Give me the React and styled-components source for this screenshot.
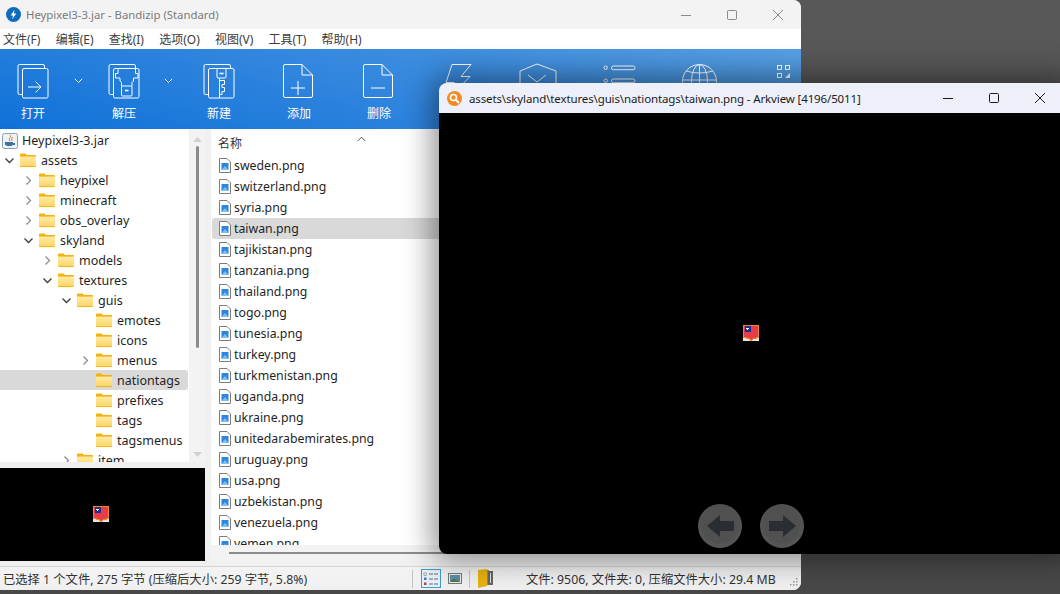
import React from "react";
import styled, { createGlobalStyle } from "styled-components";

const UI_FONT = `"Noto Sans", "Noto Sans CJK SC", sans-serif`;

const GlobalStyle = createGlobalStyle`
  html, body {
    margin: 0;
    padding: 0;
    background: #4c4c4c;
    overflow: hidden;
  }
  * {
    box-sizing: border-box;
  }
`;

const Desktop = styled.div`
  position: relative;
  width: 1060px;
  height: 594px;
  overflow: hidden;
  background: linear-gradient(to bottom, #585858, #555 60%, #484848);
  font-family: ${UI_FONT};
`;

/* windows on the desktop are the one thing placed by coordinates */
const MainWindow = styled.div`
  position: absolute;
  left: 0;
  top: 0;
  width: 801px;
  height: 590px;
  display: flex;
  flex-direction: column;
  background: #f0f0f0;
  border-radius: 0 8px 8px 0;
  overflow: hidden;
`;

const TitleBar = styled.div`
  height: 29px;
  display: flex;
  align-items: center;
  padding-left: 6px;
  background: #f3f3f3;
  color: #7b7b7b;
  font-size: 11.35px;
  flex-shrink: 0;
`;

const TitleText = styled.span`
  margin-left: 5px;
  flex: 1;
`;

const WinButton = styled.div`
  width: 46px;
  height: 29px;
  display: flex;
  align-items: center;
  justify-content: center;
  color: #8a8a8a;
`;

const MenuBar = styled.div`
  height: 20px;
  display: flex;
  align-items: center;
  gap: 15.2px;
  padding-left: 3px;
  background: #fff;
  color: #3c3c3c;
  font-size: 12px;
  flex-shrink: 0;
`;

const Toolbar = styled.div`
  position: relative;
  height: 80px;
  display: flex;
  background: linear-gradient(195deg, #58a0e3, #3a8bdf 40%, #0f71d8);
  flex-shrink: 0;
`;

const Tool = styled.div`
  width: ${(p) => p.$w || 80}px;
  display: flex;
  flex-direction: column;
  align-items: center;
  padding-top: 14px;
  color: #fff;
  font-size: 12px;
`;

const ToolLabel = styled.span`
  margin-top: 5px;
  line-height: 20px;
`;

const Caret = styled.div`
  width: ${(p) => p.$w}px;
  display: flex;
  justify-content: center;
  padding-top: 29px;
`;

const CornerGrid = styled.div`
  position: absolute;
  right: 11px;
  top: 12px;
`;

const Body = styled.div`
  flex: 1;
  min-height: 0;
  display: flex;
  padding-bottom: 5px;
  background: #f0f0f0;
`;

const LeftColumn = styled.div`
  width: 205px;
  display: flex;
  flex-direction: column;
`;

const TreePane = styled.div`
  height: 333px;
  display: flex;
  background: #fff;
  padding-top: 2px;
  overflow: hidden;
`;

const TreeList = styled.div`
  flex: 1;
  min-width: 0;
`;

const TreeRow = styled.div`
  height: 20px;
  display: flex;
  align-items: center;
  padding-left: ${(p) => p.$depth * 19 + 4}px;
  margin-right: 1px;
  background: ${(p) => (p.$selected ? "#d9d9d9" : "transparent")};
  border-radius: 0 3px 3px 0;
  color: #1f1f1f;
  font-size: 12.5px;
  white-space: nowrap;
`;

const RootRow = styled(TreeRow)`
  height: 19px;
  padding-left: 2px;
  gap: 4px;
`;

const Chevron = styled.span`
  width: 11px;
  height: 11px;
  display: flex;
  margin-right: 5px;
  flex-shrink: 0;
`;

const FolderLabel = styled.span`
  margin-left: 5px;
`;

const ScrollTrack = styled.div`
  width: 16px;
  margin-top: -2px;
  flex-shrink: 0;
  display: flex;
  flex-direction: column;
  align-items: center;
  background: #f3f3f3;
  padding-top: 8px;
`;

const ScrollThumb = styled.div`
  width: 3px;
  height: 207px;
  margin-top: 4px;
  border-radius: 2px;
  background: #8b8b8b;
`;

const ScrollDown = styled.div`
  margin-top: 92px;
`;

const Preview = styled.div`
  height: 93px;
  margin-top: 6px;
  display: flex;
  align-items: center;
  justify-content: center;
  padding: 0 4px 2px 0;
  background: #000;
`;

const Splitter = styled.div`
  width: 6px;
  flex-shrink: 0;
`;

const ListPane = styled.div`
  flex: 1;
  min-width: 0;
  display: flex;
  flex-direction: column;
  background: #fff;
`;

const ListHeader = styled.div`
  position: relative;
  height: 26px;
  display: flex;
  align-items: center;
  padding: 2px 0 0 7px;
  color: #333;
  font-size: 12px;
  flex-shrink: 0;
`;

const SortMark = styled.div`
  position: absolute;
  left: 146px;
  top: 0;
`;

const FileRows = styled.div`
  flex: 1;
  min-height: 0;
  overflow: hidden;
`;

const FileRow = styled.div`
  height: 21px;
  display: flex;
  align-items: center;
  gap: 3px;
  padding-left: 7px;
  margin-left: 1px;
  background: ${(p) => (p.$selected ? "#d9d9d9" : "transparent")};
  border-radius: 3px 0 0 3px;
  color: #1f1f1f;
  font-size: 12.3px;
`;

const HScroll = styled.div`
  height: 16px;
  flex-shrink: 0;
  display: flex;
  align-items: center;
  padding-left: 18px;
  background: #f3f3f3;
`;

const HThumb = styled.div`
  width: 300px;
  height: 2px;
  background: #8b8b8b;
`;

const StatusBar = styled.div`
  height: 24px;
  display: flex;
  align-items: center;
  padding-left: 3px;
  background: linear-gradient(to bottom, #f3f3f3, #f0f0f0);
  border-top: 1px solid #d5d5d5;
  color: #333;
  font-size: 12.3px;
  flex-shrink: 0;
`;

const StatusLeft = styled.span`
  width: 409px;
  white-space: nowrap;
`;

const StatusSep = styled.span`
  width: 1px;
  height: 18px;
  margin-left: ${(p) => p.$ml || 0}px;
  background: #c4c4c4;
`;

const StatusIcon = styled.span`
  display: flex;
  margin-left: ${(p) => p.$ml}px;
`;

const ListToggle = styled.span`
  width: 20px;
  height: 19px;
  margin-left: 8px;
  display: flex;
  align-items: center;
  justify-content: center;
  background: #e9f1f8;
  border: 1px solid #3f9bd0;
`;

const StatusRight = styled.span`
  margin-left: 32px;
  white-space: nowrap;
`;

const Grip = styled.span`
  margin-left: auto;
  margin-right: 3px;
  margin-top: 8px;
  display: flex;
`;

const ViewerWindow = styled.div`
  position: absolute;
  left: 439px;
  top: 83px;
  width: 630px;
  height: 471px;
  display: flex;
  flex-direction: column;
  border-radius: 8px 0 0 8px;
  overflow: hidden;
  box-shadow: 0 0 30px 6px rgba(0, 0, 0, 0.45);
`;

const ViewerTitle = styled.div`
  height: 30px;
  display: flex;
  align-items: center;
  padding-left: 8px;
  background: #eef0f9;
  color: #1c1c1c;
  font-size: 11.5px;
  letter-spacing: -0.13px;
  flex-shrink: 0;
`;

const ViewerName = styled.span`
  margin-left: 7px;
  width: 456px;
  white-space: nowrap;
`;

const ViewerButton = styled.div`
  width: 46px;
  display: flex;
  justify-content: center;
  color: #1c1c1c;
`;

const Stage = styled.div`
  position: relative;
  flex: 1;
  display: flex;
  align-items: center;
  justify-content: center;
  padding: 0 6px 2px 0;
  background: #000;
`;

const NavGroup = styled.div`
  position: absolute;
  left: 259px;
  bottom: 6px;
  display: flex;
  gap: 18px;
`;

const NavButton = styled.div`
  width: 44px;
  height: 44px;
  border-radius: 50%;
  display: flex;
  align-items: center;
  justify-content: center;
  background: radial-gradient(circle at 50% 45%, #505050 55%, #666 100%);
`;

const Flag = () => (
  <svg width="16" height="16" viewBox="0 0 16 16" shapeRendering="crispEdges">
    <rect y="12" width="16" height="4" fill="#e4e4e4" />
    <path d="M0 0H16V13L11 14L8 16L5 14L0 13Z" fill="#f08a24" />
    <path d="M1 1H15V12L10 13L8 15L6 13L1 12Z" fill="#e63d49" />
    <rect x="2" y="1" width="6" height="6" fill="#1c2f8f" />
    <path d="M4 3H5V2H5V3H6V4H5V5H4V4H3V3Z" fill="#fff" />
  </svg>
);

const Folder = () => (
  <svg width="16" height="14" viewBox="0 0 16 14" style={{ flexShrink: 0 }}>
    <defs>
      <linearGradient id="folderFill" x1="0" y1="0" x2="0" y2="1">
        <stop offset="0" stopColor="#ffeaa6" />
        <stop offset="1" stopColor="#fed768" />
      </linearGradient>
    </defs>
    <path d="M0 1.5Q0 .5 1 .5H5.5L7 2H15Q16 2 16 3V4H0Z" fill="#f4b20d" />
    <rect y="3" width="16" height="11" rx="1" fill="#f5b50f" />
    <rect y="3.6" width="16" height="9.4" fill="url(#folderFill)" />
  </svg>
);

const ChevronIcon = ({ open }) => (
  <svg width="11" height="11" viewBox="0 0 11 11" fill="none" stroke={open ? "#3c3c3c" : "#8d8d8d"} strokeWidth="1.3">
    <path d={open ? "M1.5 3.5L5.5 7.5L9.5 3.5" : "M3.5 1.5L7.5 5.5L3.5 9.5"} />
  </svg>
);

const FileIcon = () => (
  <svg width="12" height="15" viewBox="0 0 12 15" style={{ flexShrink: 0 }}>
    <path d="M.5.5H8L11.5 4V14.5H.5Z" fill="#fff" stroke="#7c7c7c" />
    <rect x="2.5" y="5" width="7" height="7" fill="#2f86dc" />
    <path d="M2.5 12L6 8L9.5 12Z" fill="#7cc0f2" />
  </svg>
);

const ToolIcon = ({ children, w = 34, h = 36 }) => (
  <svg width={w} height={h} viewBox={`0 0 ${w} ${h}`} fill="none" stroke="#fff" strokeWidth="1">
    {children}
  </svg>
);

const BackSheet = () => (
  <path d="M6.5 31.5H3.5Q2 31.5 2 30V3Q2 1.5 3.5 1.5H27Q28.5 1.5 28.5 3V5.5" />
);

const OpenIcon = () => (
  <ToolIcon>
    <BackSheet />
    <rect x="6.5" y="5.5" width="25.5" height="29.5" rx="1.5" />
    <path d="M12 24H25M19.5 18.5L25 24L19.5 29.5" />
  </ToolIcon>
);

const ExtractIcon = () => (
  <ToolIcon>
    <BackSheet />
    <rect x="6.5" y="5.5" width="25.5" height="29.5" rx="1.5" />
    <path d="M11 5.5V10.5H8.5V15H13V18L14.5 19.5V23M28.5 5.5V10.5H31V15H26.5V18L25 19.5V23" />
    <rect x="14.5" y="23" width="10.5" height="10" rx="1" />
    <path d="M18 27.5H21.5" strokeWidth="1.6" />
  </ToolIcon>
);

const NewIcon = () => (
  <ToolIcon>
    <BackSheet />
    <rect x="6.5" y="5.5" width="25.5" height="29.5" rx="1.5" />
    <rect x="15" y="5.5" width="9" height="9.5" rx="1" />
    <path d="M17.5 10.5H21.5" strokeWidth="1.6" />
    <path d="M17.5 15V35M17.5 17.5H22.5V21.5H20V24.5H22.5V28.5H20V31.5H17.5" />
  </ToolIcon>
);

const PageIcon = ({ children }) => (
  <ToolIcon>
    <path d="M3 1.5H20L30.5 12V33Q30.5 34.5 29 34.5H3Q1.5 34.5 1.5 33V3Q1.5 1.5 3 1.5Z" />
    <path d="M20 1.5V12H30.5" />
    {children}
  </ToolIcon>
);

const SmallCaret = () => (
  <svg width="9" height="6" viewBox="0 0 9 6" fill="none" stroke="#fff" strokeWidth="1">
    <path d="M.8.8L4.5 4.5L8.2.8" />
  </svg>
);

const MinIcon = () => (
  <svg width="12" height="12" viewBox="0 0 12 12" stroke="currentColor" fill="none">
    <path d="M1 6.5H11" />
  </svg>
);

const MaxIcon = () => (
  <svg width="12" height="12" viewBox="0 0 12 12" stroke="currentColor" fill="none">
    <rect x="1.5" y="1.5" width="9" height="9" rx="1" />
  </svg>
);

const CloseIcon = () => (
  <svg width="12" height="12" viewBox="0 0 12 12" stroke="currentColor" fill="none">
    <path d="M1 1L11 11M11 1L1 11" />
  </svg>
);

const menus = ["文件(F)", "编辑(E)", "查找(I)", "选项(O)", "视图(V)", "工具(T)", "帮助(H)"];

const tree = [
  { name: "assets", depth: 0, chevron: "open" },
  { name: "heypixel", depth: 1, chevron: "closed" },
  { name: "minecraft", depth: 1, chevron: "closed" },
  { name: "obs_overlay", depth: 1, chevron: "closed" },
  { name: "skyland", depth: 1, chevron: "open" },
  { name: "models", depth: 2, chevron: "closed" },
  { name: "textures", depth: 2, chevron: "open" },
  { name: "guis", depth: 3, chevron: "open" },
  { name: "emotes", depth: 4 },
  { name: "icons", depth: 4 },
  { name: "menus", depth: 4, chevron: "closed" },
  { name: "nationtags", depth: 4, selected: true },
  { name: "prefixes", depth: 4 },
  { name: "tags", depth: 4 },
  { name: "tagsmenus", depth: 4 },
  { name: "item", depth: 3, chevron: "closed" },
];

const files = [
  "sweden", "switzerland", "syria", "taiwan", "tajikistan", "tanzania", "thailand",
  "togo", "tunesia", "turkey", "turkmenistan", "uganda", "ukraine",
  "unitedarabemirates", "uruguay", "usa", "uzbekistan", "venezuela", "yemen",
];

const App = () => (
  <Desktop>
    <GlobalStyle />
    <MainWindow>
      <TitleBar>
        <svg width="15" height="15" viewBox="0 0 16 16">
          <circle cx="8" cy="8" r="8" fill="#0f6cbd" />
          <path d="M9 3L5 9H7.5L6.5 13L11 7H8.5Z" fill="#fff" />
        </svg>
        <TitleText>Heypixel3-3.jar - Bandizip (Standard)</TitleText>
        <WinButton><MinIcon /></WinButton>
        <WinButton><MaxIcon /></WinButton>
        <WinButton><CloseIcon /></WinButton>
      </TitleBar>
      <MenuBar>
        {menus.map((m) => <span key={m}>{m}</span>)}
      </MenuBar>
      <Toolbar>
        <Tool $w={66}><OpenIcon /><ToolLabel>打开</ToolLabel></Tool>
        <Caret $w={25}><SmallCaret /></Caret>
        <Tool $w={66}><ExtractIcon /><ToolLabel>解压</ToolLabel></Tool>
        <Caret $w={22}><SmallCaret /></Caret>
        <Tool><NewIcon /><ToolLabel>新建</ToolLabel></Tool>
        <Tool>
          <PageIcon><path d="M9 25H23M16 18V32" /></PageIcon>
          <ToolLabel>添加</ToolLabel>
        </Tool>
        <Tool>
          <PageIcon><path d="M9 25H23" /></PageIcon>
          <ToolLabel>删除</ToolLabel>
        </Tool>
        <Tool>
          <ToolIcon>
            <path d="M10 1.5H29L19 13.5H28L8 34L12.5 19.5H4Z" />
          </ToolIcon>
        </Tool>
        <Tool>
          <ToolIcon w={40}>
            <path d="M18 1L37 8V22L18 35L1 22V8Z" />
            <path d="M9 12L18 19L27 12" />
          </ToolIcon>
        </Tool>
        <Tool>
          <ToolIcon>
            <circle cx="3.7" cy="4.7" r="1.7" />
            <rect x="9.5" y="3" width="23.5" height="3.7" rx="1.8" />
            <circle cx="3.7" cy="17.7" r="1.7" />
            <rect x="9.5" y="16" width="23.5" height="3.7" rx="1.8" />
          </ToolIcon>
        </Tool>
        <Tool>
          <ToolIcon w={36}>
            <circle cx="18.5" cy="18.5" r="17" />
            <ellipse cx="18.5" cy="18.5" rx="8" ry="17" />
            <path d="M18.5 1.5V35.5M1.5 17H35.5M5 8Q18.5 12 32 8" />
          </ToolIcon>
        </Tool>
        <CornerGrid>
          <svg width="13" height="13" viewBox="0 0 13 13" fill="none" stroke="#fff">
            <rect x=".5" y=".5" width="4" height="4" />
            <rect x="8.5" y=".5" width="4" height="4" />
            <rect x=".5" y="8.5" width="4" height="4" />
            <path d="M8 13L13 8V13Z" fill="#fff" stroke="none" />
          </svg>
        </CornerGrid>
      </Toolbar>
      <Body>
        <LeftColumn>
          <TreePane>
            <TreeList>
              <RootRow $depth={0}>
                <svg width="16" height="16" viewBox="0 0 16 16">
                  <rect x=".5" y=".5" width="15" height="15" rx="2" fill="#eef2f7" stroke="#8aa0b8" />
                  <path d="M8 2C10 4 6 5 8 8M10 4C11 5 9 6 10 8" stroke="#e4772e" fill="none" />
                  <path d="M3 9H11V11Q11 13 7.5 13Q3 13 3 11ZM11 10H13V12H11" fill="#3f6fa8" />
                </svg>
                <span>Heypixel3-3.jar</span>
              </RootRow>
              {tree.map((row) => (
                <TreeRow key={row.name} $depth={row.depth} $selected={row.selected}>
                  <Chevron>
                    {row.chevron && <ChevronIcon open={row.chevron === "open"} />}
                  </Chevron>
                  <Folder />
                  <FolderLabel>{row.name}</FolderLabel>
                </TreeRow>
              ))}
            </TreeList>
            <ScrollTrack>
              <svg width="9" height="5" viewBox="0 0 9 5"><path d="M0 5L4.5 0L9 5Z" fill="#d0d0d0" /></svg>
              <ScrollThumb />
              <ScrollDown>
                <svg width="9" height="5" viewBox="0 0 9 5"><path d="M0 0H9L4.5 5Z" fill="#d0d0d0" /></svg>
              </ScrollDown>
            </ScrollTrack>
          </TreePane>
          <Preview><Flag /></Preview>
        </LeftColumn>
        <Splitter />
        <ListPane>
          <ListHeader>
            名称
            <SortMark>
              <svg width="9" height="6" viewBox="0 0 9 6" fill="none" stroke="#555">
                <path d="M.8 5L4.5 1.2L8.2 5" />
              </svg>
            </SortMark>
          </ListHeader>
          <FileRows>
            {files.map((f) => (
              <FileRow key={f} $selected={f === "taiwan"}>
                <FileIcon />
                <span>{f}.png</span>
              </FileRow>
            ))}
          </FileRows>
          <HScroll><HThumb /></HScroll>
        </ListPane>
      </Body>
      <StatusBar>
        <StatusLeft>已选择 1 个文件, 275 字节 (压缩后大小: 259 字节, 5.8%)</StatusLeft>
        <StatusSep />
        <ListToggle>
          <svg width="16" height="14" viewBox="0 0 16 14" fill="none" stroke="#5f6b78">
            <path d="M6 2H10M11 2H15M6 7H10M11 7H15M6 12H10M11 12H15" />
            <rect x="1" y="1" width="2.5" height="2.5" fill="#fff" stroke="#777" strokeWidth=".6" />
            <rect x="1" y="5.5" width="2.5" height="2.5" fill="#3c78c8" stroke="none" />
            <rect x="1" y="10.5" width="2.5" height="2.5" fill="#c83c3c" stroke="none" />
          </svg>
        </ListToggle>
        <StatusIcon $ml={7}>
          <svg width="14" height="11" viewBox="0 0 14 11">
            <rect x=".5" y=".5" width="13" height="10" fill="#ececec" stroke="#777" />
            <rect x="2" y="2" width="10" height="7" fill="#5b90a8" />
            <path d="M2 9L6 5.5L12 9Z" fill="#4e7a4e" />
          </svg>
        </StatusIcon>
        <StatusSep $ml={7} />
        <StatusIcon $ml={8}>
          <svg width="16" height="19" viewBox="0 0 16 19">
            <path d="M0 1L9 0V17L0 19Z" fill="#e8b30f" />
            <path d="M9 1H11V16H9Z" fill="#b9860b" />
            <rect x="10" y="2" width="5" height="14" fill="#666" />
            <path d="M12 4H13V14H12Z" fill="#ddd" />
          </svg>
        </StatusIcon>
        <StatusRight>文件: 9506, 文件夹: 0, 压缩文件大小: 29.4 MB</StatusRight>
        <Grip>
          <svg width="10" height="10" viewBox="0 0 10 10" fill="#9a9a9a">
            <rect x="8" y="0" width="1.5" height="1.5" />
            <rect x="5" y="3" width="1.5" height="1.5" />
            <rect x="8" y="3" width="1.5" height="1.5" />
            <rect x="2" y="6" width="1.5" height="1.5" />
            <rect x="5" y="6" width="1.5" height="1.5" />
            <rect x="8" y="6" width="1.5" height="1.5" />
          </svg>
        </Grip>
      </StatusBar>
    </MainWindow>
    <ViewerWindow>
      <ViewerTitle>
        <svg width="15" height="15" viewBox="0 0 15 15">
          <circle cx="7.5" cy="7.5" r="7.5" fill="#f58a1f" />
          <circle cx="6.5" cy="6.5" r="3" fill="none" stroke="#fff" strokeWidth="1.6" />
          <path d="M9 9L12 12" stroke="#fff" strokeWidth="2" />
        </svg>
        <ViewerName>assets\skyland\textures\guis\nationtags\taiwan.png - Arkview [4196/5011]</ViewerName>
        <ViewerButton><MinIcon /></ViewerButton>
        <ViewerButton><MaxIcon /></ViewerButton>
        <ViewerButton><CloseIcon /></ViewerButton>
      </ViewerTitle>
      <Stage>
        <Flag />
        <NavGroup>
          <NavButton>
            <svg width="27" height="22" viewBox="0 0 27 22">
              <path d="M13 0L0 11L13 22V16H27V6H13Z" fill="#2a2e33" />
            </svg>
          </NavButton>
          <NavButton>
            <svg width="27" height="22" viewBox="0 0 27 22">
              <path d="M14 0L27 11L14 22V16H0V6H14Z" fill="#2a2e33" />
            </svg>
          </NavButton>
        </NavGroup>
      </Stage>
    </ViewerWindow>
  </Desktop>
);

export default App;
